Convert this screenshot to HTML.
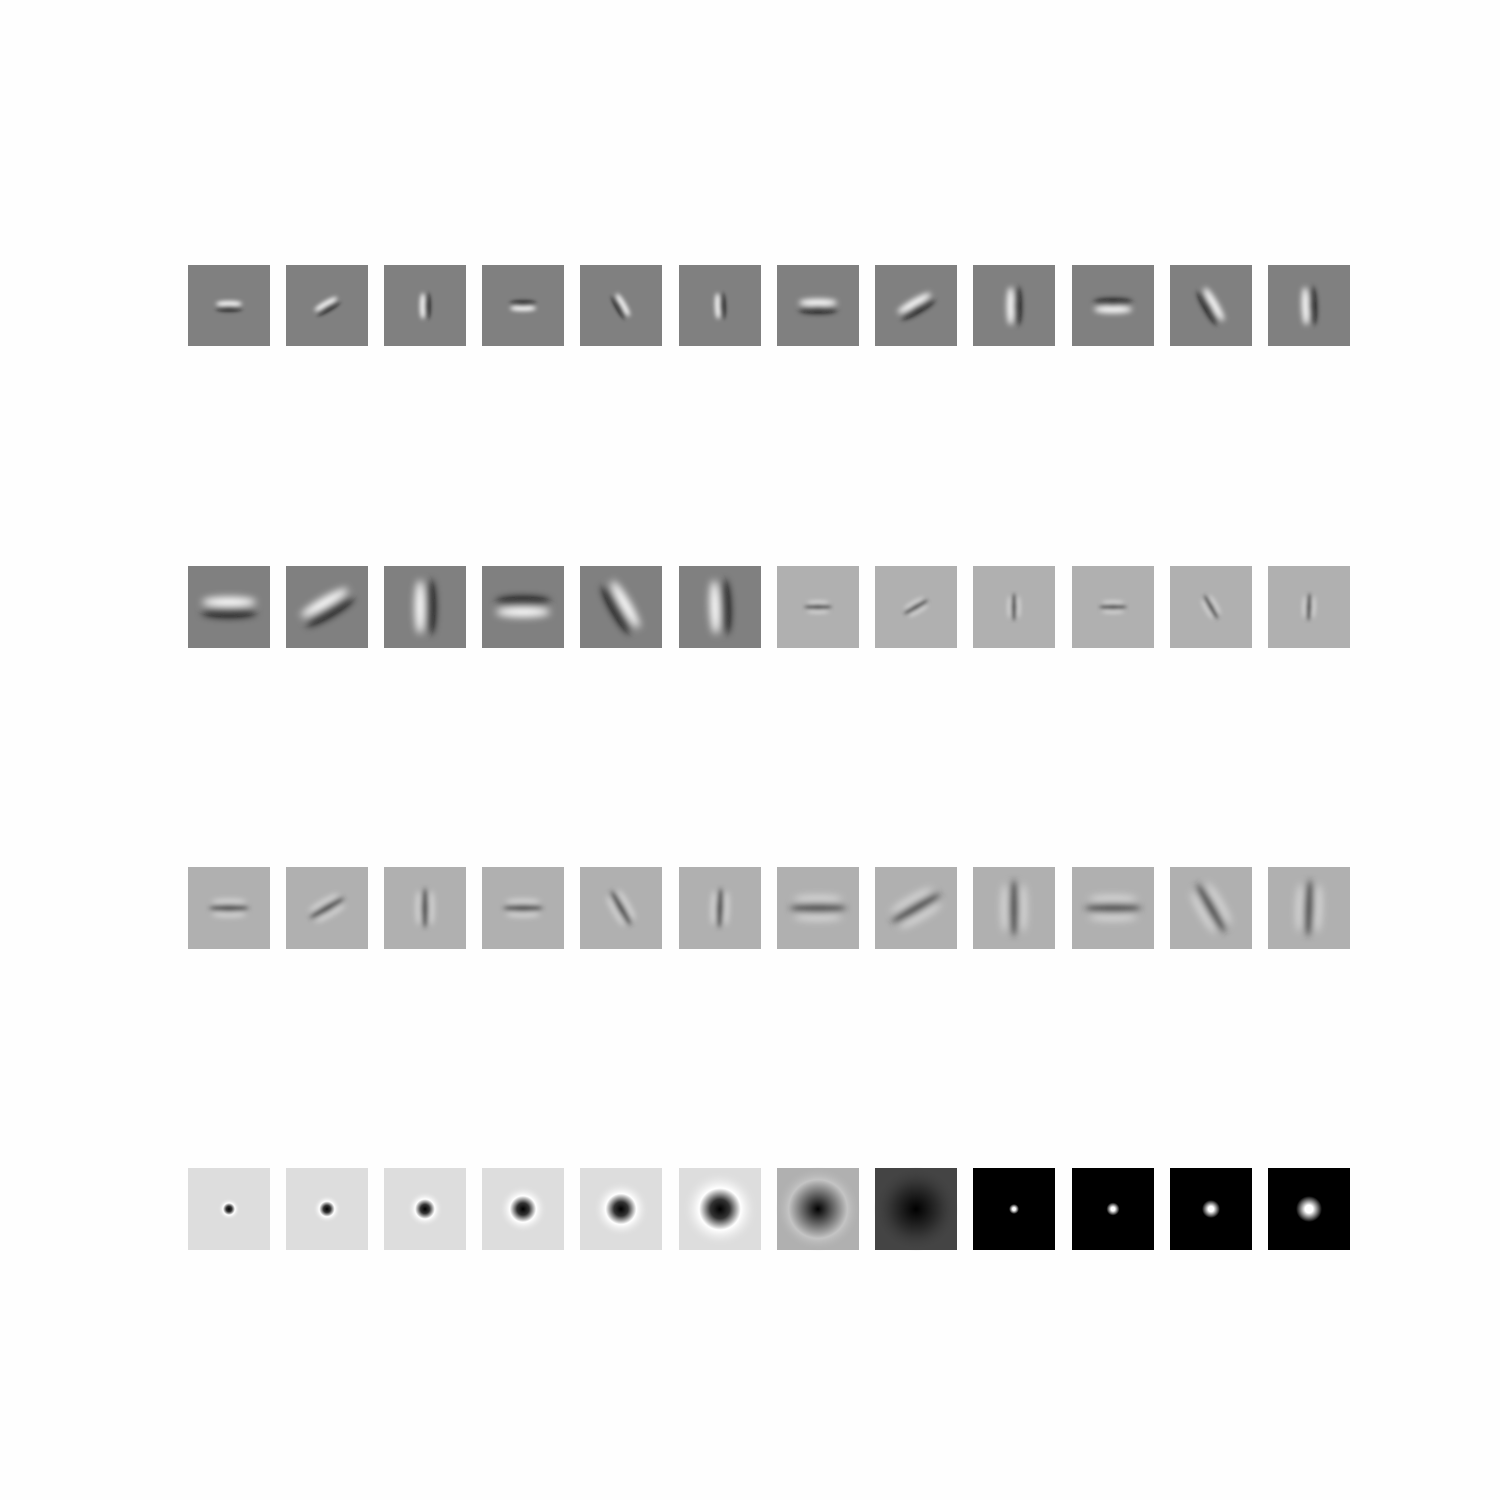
<!DOCTYPE html>
<html><head><meta charset="utf-8"><style>html,body{margin:0;padding:0;background:#fefefe}svg{display:block}</style></head>
<body>
<svg width="1500" height="1500" viewBox="0 0 1500 1500" xmlns="http://www.w3.org/2000/svg">
<defs>
<filter id="b1" x="-50%" y="-50%" width="200%" height="200%"><feGaussianBlur stdDeviation="2"/></filter>
<filter id="b2" x="-50%" y="-50%" width="200%" height="200%"><feGaussianBlur stdDeviation="2.9"/></filter>
<filter id="b3" x="-50%" y="-50%" width="200%" height="200%"><feGaussianBlur stdDeviation="4"/></filter>
<g id="d1a" filter="url(#b1)"><ellipse cx="0" cy="-2.3" rx="13" ry="2.6" fill="#fff"/><ellipse cx="0" cy="2.3" rx="13" ry="2.6" fill="#000"/></g>
<g id="d1b" filter="url(#b2)"><ellipse cx="0" cy="-3.4" rx="19" ry="3.6" fill="#fff"/><ellipse cx="0" cy="3.4" rx="19" ry="3.6" fill="#000"/></g>
<g id="d1c" filter="url(#b3)"><ellipse cx="0" cy="-5" rx="27" ry="5" fill="#fff"/><ellipse cx="0" cy="5" rx="27" ry="5" fill="#000"/></g>
<g id="d2a" filter="url(#b1)"><ellipse cx="0" cy="-4.2" rx="11" ry="2" fill="#fff" opacity=".55"/><ellipse cx="0" cy="4.2" rx="11" ry="2" fill="#fff" opacity=".55"/><ellipse cx="0" cy="0" rx="13" ry="2.6" fill="#000"/></g>
<g id="d2b" filter="url(#b2)"><ellipse cx="0" cy="-6" rx="17" ry="2.8" fill="#fff" opacity=".55"/><ellipse cx="0" cy="6" rx="17" ry="2.8" fill="#fff" opacity=".55"/><ellipse cx="0" cy="0" rx="19" ry="3.6" fill="#000"/></g>
<g id="d2c" filter="url(#b3)"><ellipse cx="0" cy="-8.5" rx="24" ry="4" fill="#fff" opacity=".55"/><ellipse cx="0" cy="8.5" rx="24" ry="4" fill="#fff" opacity=".55"/><ellipse cx="0" cy="0" rx="27" ry="5" fill="#000"/></g>
<radialGradient id="lg"><stop offset="0" stop-color="#000"/><stop offset=".25" stop-color="#333"/><stop offset=".55" stop-color="#fff"/><stop offset="1" stop-color="#ddd" stop-opacity="0"/></radialGradient>
<radialGradient id="lg7"><stop offset="0" stop-color="#000"/><stop offset=".3" stop-color="#555"/><stop offset=".7" stop-color="#c4c4c4"/><stop offset="1" stop-color="#b0b0b0" stop-opacity="0"/></radialGradient>
<radialGradient id="lg8"><stop offset="0" stop-color="#000"/><stop offset=".6" stop-color="#333"/><stop offset="1" stop-color="#444" stop-opacity="0"/></radialGradient>
<radialGradient id="gw"><stop offset="0" stop-color="#fff"/><stop offset=".3" stop-color="#fff"/><stop offset="1" stop-color="#fff" stop-opacity="0"/></radialGradient>
</defs>

<!-- Row 1 -->
<g fill="#808080">
<rect x="188" y="265" width="82" height="81"/><rect x="286" y="265" width="82" height="81"/><rect x="384" y="265" width="82" height="81"/><rect x="482" y="265" width="82" height="81"/><rect x="580" y="265" width="82" height="81"/><rect x="679" y="265" width="82" height="81"/><rect x="777" y="265" width="82" height="81"/><rect x="875" y="265" width="82" height="81"/><rect x="973" y="265" width="82" height="81"/><rect x="1072" y="265" width="82" height="81"/><rect x="1170" y="265" width="82" height="81"/><rect x="1268" y="265" width="82" height="81"/>
</g>
<use href="#d1a" transform="translate(229,306)"/>
<use href="#d1a" transform="translate(327,306) rotate(-30)"/>
<use href="#d1a" transform="translate(425,306) rotate(-90)"/>
<use href="#d1a" transform="translate(523,306) rotate(180)"/>
<use href="#d1a" transform="translate(621,306) rotate(60)"/>
<use href="#d1a" transform="translate(720,306) rotate(-92)"/>
<use href="#d1b" transform="translate(818,306)"/>
<use href="#d1b" transform="translate(916,306) rotate(-30)"/>
<use href="#d1b" transform="translate(1014,306) rotate(-90)"/>
<use href="#d1b" transform="translate(1113,306) rotate(180)"/>
<use href="#d1b" transform="translate(1211,306) rotate(60)"/>
<use href="#d1b" transform="translate(1309,306) rotate(-92)"/>

<!-- Row 2 -->
<g fill="#808080">
<rect x="188" y="566" width="82" height="82"/><rect x="286" y="566" width="82" height="82"/><rect x="384" y="566" width="82" height="82"/><rect x="482" y="566" width="82" height="82"/><rect x="580" y="566" width="82" height="82"/><rect x="679" y="566" width="82" height="82"/>
</g>
<g fill="#b0b0b0">
<rect x="777" y="566" width="82" height="82"/><rect x="875" y="566" width="82" height="82"/><rect x="973" y="566" width="82" height="82"/><rect x="1072" y="566" width="82" height="82"/><rect x="1170" y="566" width="82" height="82"/><rect x="1268" y="566" width="82" height="82"/>
</g>
<use href="#d1c" transform="translate(229,607)"/>
<use href="#d1c" transform="translate(327,607) rotate(-30)"/>
<use href="#d1c" transform="translate(425,607) rotate(-90)"/>
<use href="#d1c" transform="translate(523,607) rotate(180)"/>
<use href="#d1c" transform="translate(621,607) rotate(60)"/>
<use href="#d1c" transform="translate(720,607) rotate(-92)"/>
<use href="#d2a" transform="translate(818,607)"/>
<use href="#d2a" transform="translate(916,607) rotate(-30)"/>
<use href="#d2a" transform="translate(1014,607) rotate(90)"/>
<use href="#d2a" transform="translate(1113,607)"/>
<use href="#d2a" transform="translate(1211,607) rotate(60)"/>
<use href="#d2a" transform="translate(1309,607) rotate(92)"/>

<!-- Row 3 -->
<g fill="#b0b0b0">
<rect x="188" y="867" width="82" height="82"/><rect x="286" y="867" width="82" height="82"/><rect x="384" y="867" width="82" height="82"/><rect x="482" y="867" width="82" height="82"/><rect x="580" y="867" width="82" height="82"/><rect x="679" y="867" width="82" height="82"/><rect x="777" y="867" width="82" height="82"/><rect x="875" y="867" width="82" height="82"/><rect x="973" y="867" width="82" height="82"/><rect x="1072" y="867" width="82" height="82"/><rect x="1170" y="867" width="82" height="82"/><rect x="1268" y="867" width="82" height="82"/>
</g>
<use href="#d2b" transform="translate(229,908)"/>
<use href="#d2b" transform="translate(327,908) rotate(-30)"/>
<use href="#d2b" transform="translate(425,908) rotate(90)"/>
<use href="#d2b" transform="translate(523,908)"/>
<use href="#d2b" transform="translate(621,908) rotate(60)"/>
<use href="#d2b" transform="translate(720,908) rotate(92)"/>
<use href="#d2c" transform="translate(818,908)"/>
<use href="#d2c" transform="translate(916,908) rotate(-30)"/>
<use href="#d2c" transform="translate(1014,908) rotate(90)"/>
<use href="#d2c" transform="translate(1113,908)"/>
<use href="#d2c" transform="translate(1211,908) rotate(60)"/>
<use href="#d2c" transform="translate(1309,908) rotate(92)"/>

<!-- Row 4 -->
<g fill="#dddddd">
<rect x="188" y="1168" width="82" height="82"/><rect x="286" y="1168" width="82" height="82"/><rect x="384" y="1168" width="82" height="82"/><rect x="482" y="1168" width="82" height="82"/><rect x="580" y="1168" width="82" height="82"/><rect x="679" y="1168" width="82" height="82"/>
</g>
<rect x="777" y="1168" width="82" height="82" fill="#b0b0b0"/>
<rect x="875" y="1168" width="82" height="82" fill="#444"/>
<g fill="#000">
<rect x="973" y="1168" width="82" height="82"/><rect x="1072" y="1168" width="82" height="82"/><rect x="1170" y="1168" width="82" height="82"/><rect x="1268" y="1168" width="82" height="82"/>
</g>
<circle cx="229" cy="1209" r="11" fill="url(#lg)"/>
<circle cx="327" cy="1209" r="14" fill="url(#lg)"/>
<circle cx="425" cy="1209" r="18" fill="url(#lg)"/>
<circle cx="523" cy="1209" r="24" fill="url(#lg)"/>
<circle cx="621" cy="1209" r="28" fill="url(#lg)"/>
<circle cx="720" cy="1209" r="38" fill="url(#lg)"/>
<circle cx="818" cy="1209" r="42" fill="url(#lg7)"/>
<circle cx="916" cy="1209" r="42" fill="url(#lg8)"/>
<circle cx="1014" cy="1209" r="5" fill="url(#gw)"/>
<circle cx="1113" cy="1209" r="6.5" fill="url(#gw)"/>
<circle cx="1211" cy="1209" r="9" fill="url(#gw)"/>
<circle cx="1309" cy="1209" r="13" fill="url(#gw)"/>
</svg>
</body></html>
